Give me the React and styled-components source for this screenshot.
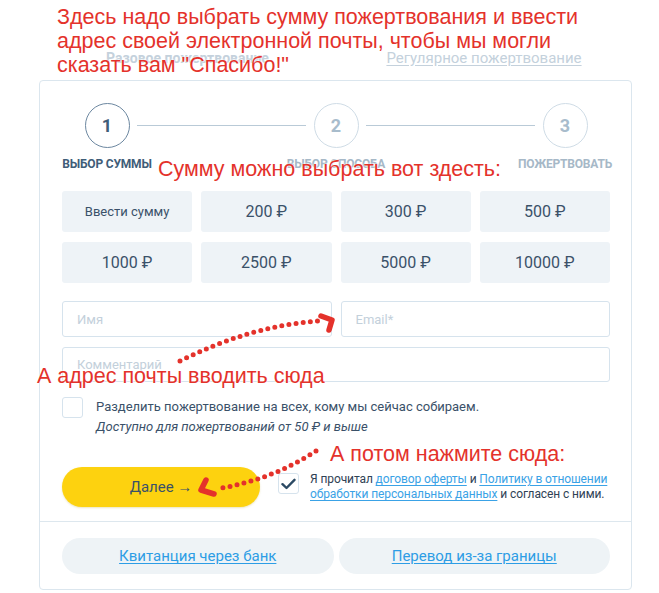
import React from 'react'
import styled, { createGlobalStyle } from 'styled-components'

const GlobalStyle = createGlobalStyle`
  html, body { margin: 0; padding: 0; background: #fff; }
  body { font-family: Roboto, "Noto Sans", sans-serif; color: #3a5169; }
  * { box-sizing: border-box; }
`

const amounts = ['Ввести сумму', '200 ₽', '300 ₽', '500 ₽', '1000 ₽', '2500 ₽', '5000 ₽', '10000 ₽']

const steps = [
  { n: 1, label: 'Выбор суммы', active: true },
  { n: 2, label: 'Выбор способа' },
  { n: 3, label: 'Пожертвовать' },
]

const App = () => {
  return (
    <Page>
      <GlobalStyle />
      <Tabs>
        <Tab $ml={11} $w={275} $active>Разовое пожертвование</Tab>
        <Tab $ml={23} $w={272}><TabLink>Регулярное пожертвование</TabLink></Tab>
      </Tabs>

      <Card>
        <Main>
          <Steps>
            {steps.map((s, i) => (
              <React.Fragment key={s.n}>
                {i > 0 && <Connector />}
                <Step>
                  <Circle $active={s.active}>{s.n}</Circle>
                  <StepLabel $active={s.active}>{s.label}</StepLabel>
                </Step>
              </React.Fragment>
            ))}
          </Steps>

          <AmountGrid>
            {amounts.map((a, i) => (
              <Amount key={a} $small={i === 0}>{a}</Amount>
            ))}
          </AmountGrid>

          <Fields>
            <Input placeholder="Имя" />
            <Input placeholder="Email*" />
            <Input placeholder="Комментарий" $wide />
          </Fields>

          <ShareRow>
            <Box />
            <ShareText>
              Разделить пожертвование на всех, кому мы сейчас собираем.
              <Hint>Доступно для пожертвований от 50 ₽ и выше</Hint>
            </ShareText>
          </ShareRow>

          <SubmitRow>
            <NextButton>Далее →</NextButton>
            <Box $checked>
              <svg width="15" height="12" viewBox="0 0 15 12">
                <path d="M1.5 6.2 L5.5 10 L13.5 1.8" fill="none" stroke="#2b4a64" strokeWidth="2.4" strokeLinecap="round" strokeLinejoin="round" />
              </svg>
            </Box>
            <Agree>
              Я прочитал <Link>договор оферты</Link> и <Link>Политику в отношении</Link>
              <br />
              <Link>обработки персональных данных</Link> и согласен с ними.
            </Agree>
          </SubmitRow>
        </Main>

        <Footer>
          <Alt><Link>Квитанция через банк</Link></Alt>
          <Alt><Link>Перевод из-за границы</Link></Alt>
        </Footer>
      </Card>

      <Note $top={5} $left={57}>
        Здесь надо выбрать сумму пожертвования и ввести<br />
        адрес своей электронной почты, чтобы мы могли<br />
        сказать вам "Спасибо!"
      </Note>
      <Note $top={157} $left={158}>Сумму можно выбрать вот здесть:</Note>
      <Note $top={364} $left={37}>А адрес почты вводить сюда</Note>
      <Note $top={442} $left={330}>А потом нажмите сюда:</Note>

      <Arrows width="659" height="593" viewBox="0 0 659 593">
        <g fill="none" stroke="#e4322b" strokeLinecap="round" strokeLinejoin="round">
          <path d="M180 361 Q 250 326 318 321" strokeWidth="5" strokeDasharray="0 7.2" />
          <polyline points="321,316 332,320 329,330" strokeWidth="5.5" />
          <path d="M316 451 Q 272 480 216 489" strokeWidth="5" strokeDasharray="0 7.2" />
          <polyline points="206,480 201,490 214,494" strokeWidth="5.5" />
        </g>
      </Arrows>
    </Page>
  )
}

export default App

const Page = styled.div`
  position: relative;
  width: 659px;
  height: 593px;
  padding: 35px 0 0 39px;
  overflow: hidden;
`

const Tabs = styled.div`
  display: flex;
  height: 45px;
  width: 593px;
`

const Tab = styled.div`
  position: relative;
  display: flex;
  align-items: center;
  justify-content: center;
  width: ${p => p.$w}px;
  margin-left: ${p => p.$ml}px;
  font-size: ${p => (p.$active ? 14 : 15)}px;
  font-weight: ${p => (p.$active ? 700 : 400)};
  color: #c4d1dc;
  &::before {
    content: "";
    position: absolute;
    inset: 0;
    z-index: -1;
    border-radius: 8px 10px 0 0;
    background: ${p => (p.$active
      ? '#fff'
      : 'linear-gradient(to right, #f2f6f8 86%, #e2eaf0 100%)')};
    clip-path: polygon(4% 0, 95% 0, 100% 100%, 0 100%);
  }
`

const TabLink = styled.span`
  text-decoration: underline;
  text-underline-offset: 2px;
`

const Card = styled.section`
  width: 593px;
  height: 510px;
  border: 1px solid #dbe6ee;
  border-radius: 4px;
  background: #fff;
  display: flex;
  flex-direction: column;
`

const Main = styled.div`
  padding: 22px 21px 14px 22px;
`

const Steps = styled.div`
  display: flex;
  align-items: flex-start;
`

const Step = styled.div`
  width: 90px;
  display: flex;
  flex-direction: column;
  align-items: center;
`

const Circle = styled.div`
  width: 45px;
  height: 45px;
  border-radius: 50%;
  border: 1.5px solid ${p => (p.$active ? '#6c87a0' : '#cfdce6')};
  background: #fff;
  position: relative;
  z-index: 1;
  display: flex;
  align-items: center;
  justify-content: center;
  font-size: 18px;
  font-weight: 700;
  color: ${p => (p.$active ? '#3f5d78' : '#a8bccc')};
`

const StepLabel = styled.div`
  margin-top: 9px;
  font-size: 12px;
  line-height: 14px;
  font-weight: 700;
  text-transform: uppercase;
  white-space: nowrap;
  letter-spacing: -0.2px;
  color: ${p => (p.$active ? '#3f5d78' : '#a6b8c7')};
`

const Connector = styled.div`
  flex: 1;
  height: 1px;
  margin: 22px -15px 0;
  background: #b9cad7;
`

const AmountGrid = styled.div`
  margin-top: 20px;
  display: grid;
  grid-template-columns: repeat(4, 1fr);
  gap: 10px 9px;
`

const Amount = styled.div`
  height: 41px;
  border-radius: 3px;
  background: #eef3f7;
  display: flex;
  align-items: center;
  justify-content: center;
  font-size: ${p => (p.$small ? 13 : 16)}px;
  color: #3a5169;
`

const Fields = styled.div`
  margin-top: 18px;
  display: grid;
  grid-template-columns: 1fr 1fr;
  gap: 10px 9px;
`

const Input = styled.input`
  grid-column: ${p => (p.$wide ? '1 / -1' : 'auto')};
  height: ${p => (p.$wide ? 35 : 36)}px;
  border: 1px solid #d6e3ed;
  border-radius: 3px;
  padding: 0 14px;
  font-family: inherit;
  font-size: 13px;
  color: #3a5169;
  outline: none;
  &::placeholder { color: #c3d0db; }
`

const ShareRow = styled.div`
  margin-top: 15px;
  display: flex;
  gap: 13px;
`

const Box = styled.div`
  flex: none;
  width: 21px;
  height: 21px;
  border: 1px solid #d6e3ed;
  border-radius: 3px;
  display: flex;
  align-items: center;
  justify-content: center;
  background: #fff;
`

const ShareText = styled.div`
  font-size: 13px;
  line-height: 20px;
  color: #3a5169;
`

const Hint = styled.div`
  font-style: italic;
`

const SubmitRow = styled.div`
  margin-top: 30px;
  display: flex;
  align-items: center;
  ${Box} { margin-left: 18px; margin-top: -7px; }
`

const NextButton = styled.button`
  flex: none;
  width: 198px;
  height: 40px;
  border: none;
  border-radius: 20px;
  background: #fdd20f;
  box-shadow: 0 1px 2px rgba(180, 150, 0, 0.25);
  font-family: inherit;
  font-size: 15px;
  color: #3a5169;
`

const Agree = styled.div`
  margin-left: 11px;
  font-size: 12px;
  line-height: 15px;
  letter-spacing: -0.1px;
  white-space: nowrap;
  color: #2f4255;
`

const Link = styled.a`
  color: #3aa2e6;
  text-decoration: underline;
  text-underline-offset: 2px;
`

const Footer = styled.div`
  border-top: 1px solid #dde7ee;
  padding: 16px 21px 15px 22px;
  display: grid;
  grid-template-columns: 1fr 1fr;
  gap: 5px;
`

const Alt = styled.div`
  height: 36px;
  border-radius: 18px;
  background: #eef3f6;
  display: flex;
  align-items: center;
  justify-content: center;
  font-size: 15px;
  ${Link} { color: #2d9de5; }
`

const Note = styled.div`
  position: absolute;
  top: ${p => p.$top}px;
  left: ${p => p.$left}px;
  font-family: "Liberation Sans", Arial, sans-serif;
  font-size: 21.5px;
  line-height: 24px;
  color: #e4322b;
  white-space: nowrap;
  text-shadow: 0 0 2px #fff, 0 0 2px #fff;
`

const Arrows = styled.svg`
  position: absolute;
  top: 0;
  left: 0;
  pointer-events: none;
`
